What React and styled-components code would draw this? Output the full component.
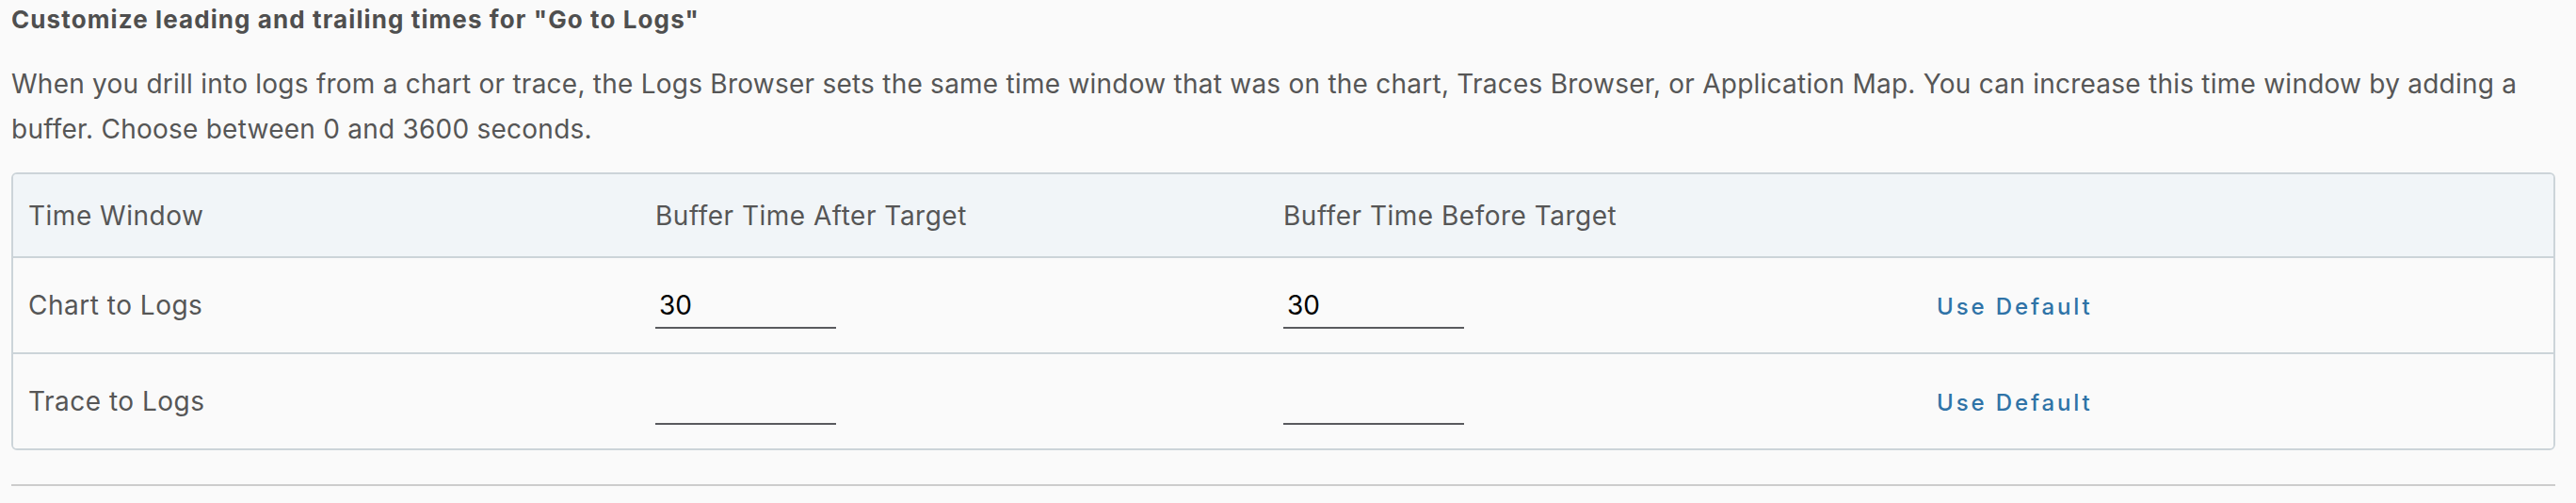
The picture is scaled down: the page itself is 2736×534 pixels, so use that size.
import React from 'react'
import styled, { createGlobalStyle } from 'styled-components'

const GlobalStyle = createGlobalStyle`
  * { box-sizing: border-box; }
  body {
    margin: 0;
    background: #fafafa;
    font-family: Inter, "Open Sans", sans-serif;
    color: #565656;
  }
`

const rows = [
  { label: 'Chart to Logs', after: '30', before: '30' },
  { label: 'Trace to Logs', after: '', before: '' },
]

const Settings = () => {
  return (
    <Page>
      <Title>Customize leading and trailing times for "Go to Logs"</Title>
      <Description>
        When you drill into logs from a chart or trace, the Logs Browser sets the same time window that was on the chart,
        Traces Browser, or Application Map. You can increase this time window by adding a buffer. Choose between 0 and 3600 seconds.
      </Description>
      <Table>
        <Row header>
          <Cell>Time Window</Cell>
          <Cell>Buffer Time After Target</Cell>
          <Cell>Buffer Time Before Target</Cell>
          <Cell />
        </Row>
        {rows.map((r, i) => (
          <Row key={r.label} last={i === rows.length - 1}>
            <Cell>{r.label}</Cell>
            <Cell><TimeInput type="text" defaultValue={r.after} /></Cell>
            <Cell><TimeInput type="text" defaultValue={r.before} /></Cell>
            <Cell><LinkButton>Use Default</LinkButton></Cell>
          </Row>
        ))}
      </Table>
      <Divider />
    </Page>
  )
}

export default function App() {
  return (
    <>
      <GlobalStyle />
      <Settings />
    </>
  )
}

const Page = styled.div`
  padding: 3px 22px 0 12px;
`

const Title = styled.h3`
  margin: 0;
  font-size: 26px;
  line-height: 36px;
  font-weight: 700;
  letter-spacing: 1.1px;
  color: #4f4f4f;
`

const Description = styled.p`
  margin: 26px 0 0;
  font-size: 28px;
  line-height: 48px;
  letter-spacing: 0.24px;
  color: #565656;
`

const Table = styled.div`
  margin-top: 22px;
  border: 2px solid #ccd4d9;
  border-radius: 6px;
  overflow: hidden;
`

const Row = styled.div`
  display: grid;
  grid-template-columns: 666px 667px 694px 1fr;
  align-items: center;
  height: ${p => (p.header ? '89px' : p.last ? '100px' : '102px')};
  background: ${p => (p.header ? '#f1f5f8' : '#fafafa')};
  border-bottom: ${p => (p.last ? 'none' : '2px solid #ccd4d9')};
`

const Cell = styled.div`
  padding-left: 16px;
  font-size: 28px;
  line-height: 40px;
  letter-spacing: 0.5px;
  color: #565656;
`

const TimeInput = styled.input`
  display: block;
  width: 192px;
  height: 48px;
  margin-top: 2px;
  padding: 0 4px;
  border: none;
  border-bottom: 2px solid #595a5e;
  background: transparent;
  font-family: Inter, "Open Sans", sans-serif;
  font-size: 28px;
  color: #000;
  outline: none;
`

const LinkButton = styled.button`
  border: none;
  background: none;
  padding: 0;
  font-family: Inter, "Open Sans", sans-serif;
  font-size: 24px;
  font-weight: 500;
  letter-spacing: 0.12em;
  color: #2f73a7;
  cursor: pointer;
`

const Divider = styled.div`
  margin-top: 36px;
  height: 2px;
  background: #cccccc;
`
